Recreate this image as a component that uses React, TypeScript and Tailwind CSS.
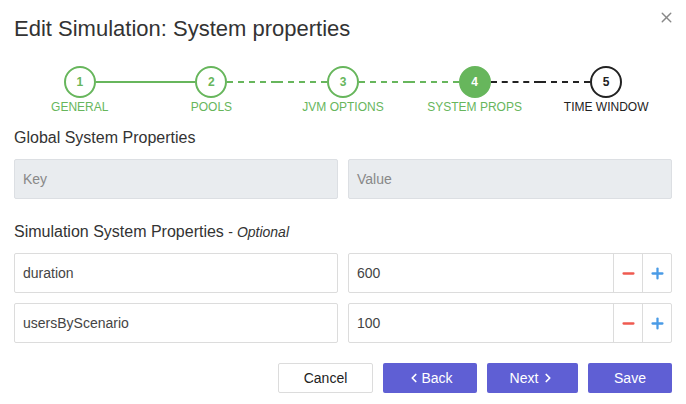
import { X, ChevronLeft, ChevronRight, Minus, Plus } from "lucide-react";

// Steps of the wizard
const STEPS = [
  { n: 1, label: "GENERAL", state: "done" },
  { n: 2, label: "POOLS", state: "done" },
  { n: 3, label: "JVM OPTIONS", state: "done" },
  { n: 4, label: "SYSTEM PROPS", state: "active" },
  { n: 5, label: "TIME WINDOW", state: "todo" },
];

const PROPS = [
  { key: "duration", value: "600" },
  { key: "usersByScenario", value: "100" },
];

function Connector({ solid, dark }: { solid?: boolean; dark?: boolean }) {
  if (solid) return <div className="flex-1 h-[2px] bg-[#67b65c]" />;
  return (
    <div
      className={`flex-1 h-0 border-t-2 border-dashed ${dark ? "border-[#222]" : "border-[#67b65c]"}`}
    />
  );
}

export default function App() {
  return (
    <div className="w-[686px] h-[404px] bg-white relative font-['Liberation_Sans',Arial,sans-serif] text-[#333] px-[14px]">
      <button className="absolute right-[11px] top-[9px] text-[#888]">
        <X size={17} strokeWidth={2} />
      </button>

      <h2 className="text-[22px] leading-[26px] pt-[16px]">Edit Simulation: System properties</h2>

      {/* STEPPER */}
      <div className="grid grid-cols-5 mt-[24px] h-[54px]">
        {STEPS.map((s, i) => (
          <div key={s.n} className="flex flex-col items-center">
            <div className="flex items-center w-full h-[32px]">
              {i === 0 ? <div className="flex-1" /> : <Connector solid={i === 1} dark={i === 4} />}
              <div
                className={`w-[32px] h-[32px] rounded-full flex items-center justify-center text-[12px] font-bold border-2 ${
                  s.state === "active"
                    ? "bg-[#67b65c] border-[#67b65c] text-white"
                    : s.state === "done"
                    ? "border-[#67b65c] text-[#67b65c] bg-white"
                    : "border-[#222] text-[#222] bg-white"
                }`}
              >
                {s.n}
              </div>
              {i === 4 ? <div className="flex-1" /> : <Connector solid={i === 0} dark={i === 3} />}
            </div>
            <div
              className={`text-[12px] leading-[14px] mt-[2px] ${
                s.state === "todo" ? "text-[#222]" : "text-[#67b65c]"
              }`}
            >
              {s.label}
            </div>
          </div>
        ))}
      </div>

      {/* GLOBAL */}
      <h3 className="text-[16px] leading-[20px] mt-[8px]">Global System Properties</h3>
      <div className="grid grid-cols-2 gap-[10px] mt-[11px]">
        <div className="h-[40px] border border-[#dcdfe3] bg-[#e9ecef] rounded-[2px] px-[8px] flex items-center text-[14px] text-[#888]">
          Key
        </div>
        <div className="h-[40px] border border-[#dcdfe3] bg-[#e9ecef] rounded-[2px] px-[8px] flex items-center text-[14px] text-[#888]">
          Value
        </div>
      </div>

      {/* SIMULATION */}
      <h3 className="text-[16px] leading-[20px] mt-[23px]">
        Simulation System Properties <span className="text-[14px]">- <i>Optional</i></span>
      </h3>
      <div className="flex flex-col gap-[10px] mt-[11px]">
        {PROPS.map((p) => (
          <div key={p.key} className="grid grid-cols-2 gap-[10px]">
            <div className="h-[40px] border border-[#dcdcdc] rounded-[2px] px-[8px] flex items-center text-[14px] text-[#444]">
              {p.key}
            </div>
            <div className="h-[40px] border border-[#dcdcdc] rounded-[2px] flex items-center text-[14px] text-[#444]">
              <div className="flex-1 px-[8px]">{p.value}</div>
              <div className="w-[29px] h-full border-l border-[#dcdcdc] flex items-center justify-center text-[#ef5a50]">
                <Minus size={17} strokeWidth={3.2} />
              </div>
              <div className="w-[29px] h-full border-l border-[#dcdcdc] flex items-center justify-center text-[#4a9be6]">
                <Plus size={17} strokeWidth={3.2} />
              </div>
            </div>
          </div>
        ))}
      </div>

      {/* BUTTONS */}
      <div className="flex justify-end gap-[10px] mt-[20px]">
        <button className="w-[95px] h-[30px] border border-[#dcdcdc] rounded-[2px] bg-white text-[14px] text-[#222]">
          Cancel
        </button>
        <button className="w-[94px] h-[30px] rounded-[2px] bg-[#5f5fd4] text-white text-[14px] flex items-center justify-center">
          <ChevronLeft size={14} strokeWidth={3} />
          Back
        </button>
        <button className="w-[91px] h-[30px] rounded-[2px] bg-[#5f5fd4] text-white text-[14px] flex items-center justify-center gap-[3px]">
          Next
          <ChevronRight size={14} strokeWidth={3} />
        </button>
        <button className="w-[84px] h-[30px] rounded-[2px] bg-[#5f5fd4] text-white text-[14px]">Save</button>
      </div>
    </div>
  );
}
